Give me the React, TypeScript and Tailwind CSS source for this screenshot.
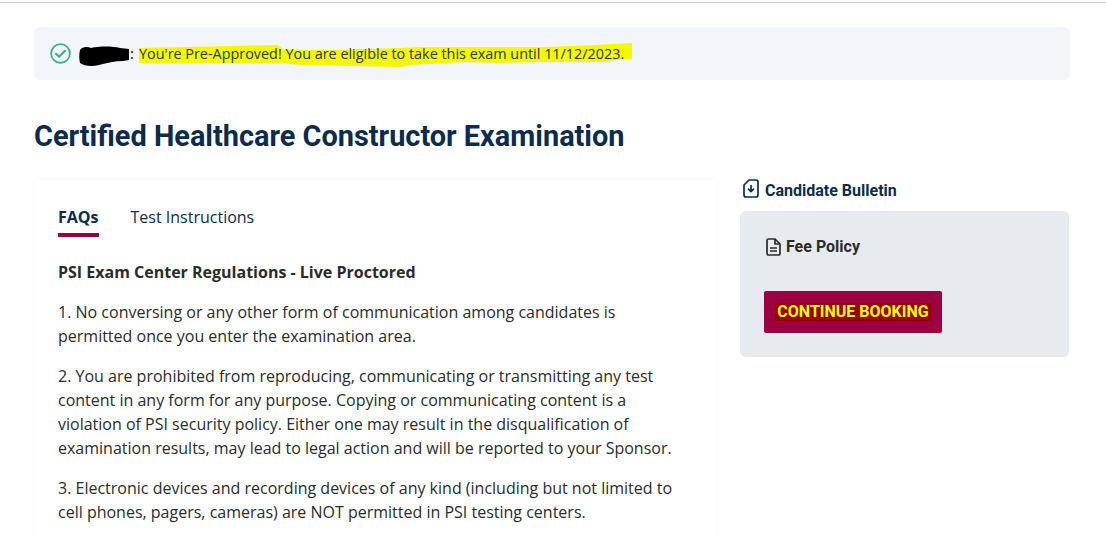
export default function App() {
  return (
    <div className="h-[536px] w-[1106px] overflow-hidden bg-white font-['Open_Sans',sans-serif] text-[#2b2b2b]">
      <div className="mt-[2px] h-px bg-[#cfcfcf]" />
      <div className="pl-[34px] pr-[36px] pt-[24px]">
        <div className="flex h-[53px] items-center rounded-md bg-[#f2f5fa] pl-[16px] text-[14.4px] text-[#2d3a33]">
          <svg width="21" height="21" viewBox="0 0 21 21" fill="none" stroke="#3fae8e" strokeWidth="1.8" className="mr-[8px] shrink-0">
            <circle cx="10.500" cy="10.500" r="9.400" />
            <path d="M6 10.800l3.100 3 5.900-6" strokeWidth="2.200" strokeLinecap="round" strokeLinejoin="round" />
          </svg>
          <span className="flex items-center">
            <svg width="50" height="22" viewBox="0 0 50 22" className="mt-[5px] shrink-0">
              <path d="M1 5C3 2 8 1 12 3C20 1 34 1 41 3L50 4L50 15L44 16C36 16 28 18 20 20C13 22 5 21 1 18C0 14 0 9 1 5Z" fill="#000" />
            </svg>
            <span className="ml-[1px] mr-[5px] font-semibold">:</span>
            <span className="relative">
              <svg width="500" height="30" viewBox="0 0 500 30" className="absolute left-0 top-[-3px]">
                <path d="M0 8L139 5L145 10L195 10L262 8L282 7L407 7L457 5L493 3L493 19L477 20L462 22L402 22L362 23L327 22L272 25L262 27L162 25L139 23L0 23Z" fill="#f4f800" />
              </svg>
              <span className="relative">You're Pre-Approved! You are eligible to take this exam until 11/12/2023.</span>
            </span>
          </span>
        </div>

        <h1 className="mt-[35px] font-['Roboto',sans-serif] text-[28.9px] font-bold leading-[43px] text-[#0b2c4d]">
          Certified Healthcare Constructor Examination
        </h1>

        <div className="mt-[22px] flex items-start gap-[24px]">
          <div className="h-[400px] w-[682px] shrink-0 bg-white pl-[24px] pr-[40px] pt-[24px] shadow-[0_0_4px_rgba(0,0,0,0.04)]">
            <div className="flex gap-[32px] text-[16px] text-[#0b2c4d]">
              <div className="h-[33px] border-b-[4px] border-[#9c0040] font-bold leading-[26px]">FAQs</div>
              <div className="leading-[26px]">Test Instructions</div>
            </div>
            <div className="mt-[23px] text-[16px] leading-[24px] text-[#2b2b2b]">
              <p className="font-bold">PSI Exam Center Regulations - Live Proctored</p>
              <p className="mt-[16px]">1. No conversing or any other form of communication among candidates is permitted once you enter the examination area.</p>
              <p className="mt-[16px]">2. You are prohibited from reproducing, communicating or transmitting any test content in any form for any purpose. Copying or communicating content is a violation of PSI security policy. Either one may result in the disqualification of examination results, may lead to legal action and will be reported to your Sponsor.</p>
              <p className="mt-[16px]">3. Electronic devices and recording devices of any kind (including but not limited to cell phones, pagers, cameras) are NOT permitted in PSI testing centers.</p>
            </div>
          </div>

          <div className="w-[329px] shrink-0 font-['Roboto',sans-serif]">
            <div className="mb-[10px] flex h-[21px] items-center text-[16px] font-bold text-[#0b2c4d]">
              <svg width="16" height="19" viewBox="0 0 16 19" fill="none" stroke="#0b2c4d" strokeWidth="1.700" className="ml-[3px] mr-[6px] mt-[-4px] shrink-0" strokeLinejoin="round" strokeLinecap="round">
                <path d="M6 1h7a2 2 0 0 1 2 2v13a2 2 0 0 1-2 2H3a2 2 0 0 1-2-2V6z" />
                <path d="M8 6.500v6M5.500 10.200L8 12.700l2.500-2.500" />
              </svg>
              Candidate Bulletin
            </div>
            <div className="h-[146px] rounded-md bg-[#e7eaee] pl-[24px] pt-[26px]">
              <div className="flex h-[20px] items-center text-[16px] font-bold text-[#2b2b2b]">
                <svg width="15" height="18" viewBox="0 0 15 18" fill="none" stroke="#2b2b2b" strokeWidth="1.700" className="ml-[2px] mr-[5px] shrink-0" strokeLinejoin="round">
                  <path d="M1 2.500A1.500 1.500 0 0 1 2.500 1H9l5 5v9.500a1.500 1.500 0 0 1-1.500 1.500h-10A1.500 1.500 0 0 1 1 15.500z" />
                  <path d="M9 1v5h5M4 10h7M4 13h7" />
                </svg>
                Fee Policy
              </div>
              <div className="mt-[34px] flex h-[42px] w-[178px] items-center justify-center rounded-[2px] bg-[#9c0040]">
                <span className="bg-[#990000] px-[2px] text-[16px] font-bold leading-[18px] text-[#ffff00]">CONTINUE BOOKING</span>
              </div>
            </div>
          </div>
        </div>
      </div>
    </div>
  );
}
